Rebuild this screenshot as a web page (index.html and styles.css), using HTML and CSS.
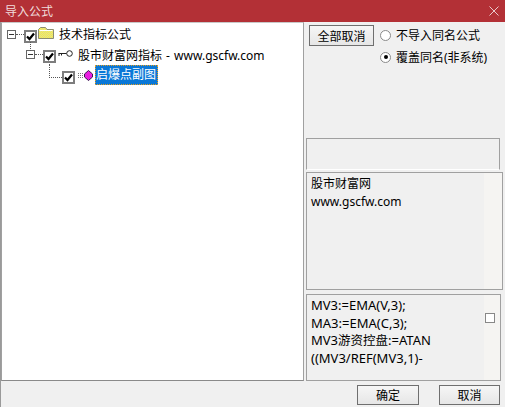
FILE: index.html
```html
<!DOCTYPE html>
<html lang="zh">
<head>
<meta charset="utf-8">
<title>导入公式</title>
<link rel="stylesheet" href="styles.css">
</head>
<body>
<div class="window">
  <header class="titlebar">
    <span class="title">导入公式</span>
    <svg class="close" width="10" height="10" viewBox="0 0 10 10"><path d="M0.5 0.5L9.5 9.5M9.5 0.5L0.5 9.5" stroke="#e9c9cb" stroke-width="1" fill="none"/></svg>
  </header>
  <div class="content">
    <section class="tree">
      <div class="node n1">
        <span class="expander"></span><span class="dots-h"></span><span class="check"><svg width="9" height="9" viewBox="0 0 9 9"><path d="M1 4.500L3.500 7L8 1.500" stroke="#000" stroke-width="2.200" fill="none"/></svg></span>
        <svg class="icon folder" width="16" height="12" viewBox="0 0 16 12"><defs><pattern id="dither" width="2" height="2" patternUnits="userSpaceOnUse"><rect width="2" height="2" fill="#fff33a"/><rect width="1" height="1" fill="#d8d8a0"/><rect x="1" y="1" width="1" height="1" fill="#d8d8a0"/></pattern></defs><path d="M0.500 11.500V2.500L2.500 0.500H7.500L9 2.500H15.500V11.500Z" fill="url(#dither)" stroke="#8c8c70"/><path d="M1.500 3.500H14.500" stroke="#fff"/></svg>
        <span class="label first">技术指标公式</span>
      </div>
      <div class="node n2">
        <span class="expander"></span><span class="dots-h"></span><span class="check"><svg width="9" height="9" viewBox="0 0 9 9"><path d="M1 4.500L3.500 7L8 1.500" stroke="#000" stroke-width="2.200" fill="none"/></svg></span>
        <svg class="icon key" width="15" height="7" viewBox="0 0 15 7"><circle cx="11.500" cy="3.500" r="2.800" fill="#fff" stroke="#222"/><path d="M8.500 3.500H0.500M1 3.500V6M3.500 3.500V5.500" stroke="#222" fill="none"/></svg>
        <span class="label second">股市财富网指标 - www.gscfw.com</span>
      </div>
      <div class="node n3">
        <span class="elbow"></span><span class="check"><svg width="9" height="9" viewBox="0 0 9 9"><path d="M1 4.500L3.500 7L8 1.500" stroke="#000" stroke-width="2.200" fill="none"/></svg></span>
        <svg class="icon gem" width="15" height="11" viewBox="0 0 15 11"><path d="M0 3.500H5M0 5.500H5M0 7.500H5" stroke="#777" stroke-dasharray="1 1" fill="none"/><path d="M10.500 0.500L14.500 4V7L10.500 10.500L6.500 7V4Z" fill="#ea1fe0" stroke="#3a1a50"/></svg>
        <span class="label selected">启爆点副图</span>
      </div>
    </section>
    <aside class="side">
      <div class="controls">
        <button class="btn cancel-all" type="button">全部取消</button>
        <div class="radios">
          <div class="radio-row"><span class="radio"></span><span>不导入同名公式</span></div>
          <div class="radio-row"><span class="radio on"></span><span>覆盖同名(非系统)</span></div>
        </div>
      </div>
      <div class="box empty"></div>
      <div class="box info">股市财富网<br>www.gscfw.com</div>
      <div class="box code">
        <div class="code-text">MV3:=EMA(V,3);<br>MA3:=EMA(C,3);<br>MV3<span class="cjk">游资控盘</span>:=ATAN<br>((MV3/REF(MV3,1)-</div>
        <span class="square"></span>
      </div>
    </aside>
  </div>
  <footer class="footer">
    <button class="btn ok" type="button">确定</button>
    <button class="btn cancel" type="button">取消</button>
  </footer>
</div>
</body>
</html>
```
FILE: styles.css
```css
* { box-sizing: border-box; }
html, body { margin: 0; padding: 0; }
body {
  width: 505px;
  height: 407px;
  overflow: hidden;
  background: #f0f0f0;
  font-family: "Noto Sans", "Noto Sans CJK SC", sans-serif;
  font-size: 12px;
  color: #000;
}
.window { display: flex; flex-direction: column; height: 407px; border-left: 1px solid #9a9a9a; }
.titlebar {
  height: 22px;
  flex: none;
  margin-left: -1px;
  background: #b33036;
  display: flex;
  align-items: center;
  justify-content: space-between;
  padding: 0 6px 0 5px;
  color: #f0dcdc;
  font-size: 12px;
}
.content { flex: none; height: 359px; display: flex; }
.tree {
  width: 303px;
  height: 359px;
  background: #fff;
  border: 1px solid #a0a0a0;
  border-top-color: #c8c8c8;
  border-bottom-color: #8a8a8a;
  padding: 1px 0 0 5px;
}
.node { display: flex; align-items: center; height: 20.500px; position: relative; }
.n2 { margin-left: 19px; }
.n2::before {
  content: "";
  position: absolute;
  left: 4px;
  top: -3px;
  height: 9px;
  border-left: 1px dotted #555;
}
.n3 { margin-left: 42px; }
.expander {
  width: 9px;
  height: 9px;
  border: 1px solid #666;
  background: linear-gradient(#333, #333) center / 5px 1px no-repeat #fff;
  flex: none;
}
.dots-h { width: 8px; border-top: 1px dotted #555; flex: none; }
.elbow {
  width: 13px;
  height: 14px;
  flex: none;
  align-self: flex-start;
  margin-top: -1px;
  border-left: 1px dotted #555;
  border-bottom: 1px dotted #555;
}
.check {
  width: 13px;
  height: 13px;
  margin-top: 4px;
  border: 2px solid #7d7d7d;
  background: #fff;
  display: flex;
  align-items: center;
  justify-content: center;
  flex: none;
}
.icon { flex: none; }
.folder { margin: 0 0 2px 1px; }
.key { margin: 0 0 2px 2px; }
.gem { margin: 1px 0 0 3px; }
.label { white-space: nowrap; font-size: 12px; margin-bottom: 0; }
.first { margin-left: 5px; }
.second { margin-left: 5px; word-spacing: 1px; }
.selected {
  background: #0a78d7;
  color: #fff;
  outline: 1px dotted #e8a020;
  outline-offset: -1px;
  padding: 0 2px 0 1px;
  height: 20px;
  line-height: 19px;
  margin: -1px 0 0 2px;
}
.side { width: 199px; margin-left: 2px; display: flex; flex-direction: column; }
.controls { display: flex; height: 116px; padding: 3px 0 0 3px; }
.btn {
  font: inherit;
  color: #000;
  background: linear-gradient(#f6f6f6, #e6e6e6);
  border: 1px solid #6f6f6f;
  padding: 0;
  border-radius: 0;
}
.cancel-all { width: 65px; height: 21px; }
.radios { margin: 1px 0 0 6px; display: flex; flex-direction: column; gap: 4px; }
.radio-row { display: flex; align-items: center; height: 18px; gap: 5px; white-space: nowrap; }
.radio {
  width: 11px;
  height: 11px;
  border-radius: 50%;
  border: 1px solid #8a8a8a;
  background: #fff;
  flex: none;
  display: flex;
  align-items: center;
  justify-content: center;
}
.radio.on::after { content: ""; width: 4px; height: 4px; border-radius: 50%; background: #000; }
.box { border: 1px solid #a0a0a0; background: linear-gradient(90deg, #f0f0f0 177px, #f5f4f2 177px); }
.empty { width: 194px; height: 32px; background: #f0f0f0; border-bottom-color: #fff; }
.info { width: 197px; height: 118px; margin-top: 2px; padding: 2px 4px; line-height: 18px; }
.code { width: 195px; height: 87px; margin-top: 4px; padding: 2px 4px; line-height: 17.500px; font-size: 13px; display: flex; justify-content: space-between; }
.code-text { white-space: nowrap; }
.cjk { font-size: 12.500px; }
.square { width: 10px; height: 10px; border: 1px solid #888; background: #fff; margin: 16px 1px 0 0; flex: none; }
.footer { flex: none; height: 26px; display: flex; justify-content: flex-end; padding: 4px 5px 0 0; gap: 20px; }
.ok { width: 62px; height: 20px; }
.cancel { width: 61px; height: 20px; }
```
